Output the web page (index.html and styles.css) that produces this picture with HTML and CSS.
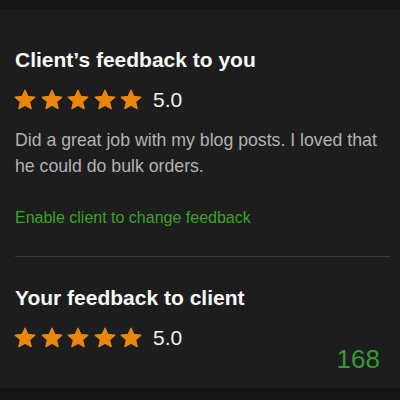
FILE: index.html
```html
<html>

<head>
	<link rel="stylesheet" href="styles.css">
</head>

<body>
	<div class="card">
		<section class="block">
			<h2>Client’s feedback to you</h2>
			<div class="rating">
				<span class="stars">
					<svg viewBox="0 0 24 24"><path d="M12 2.2l2.9 6.3 6.9.7-5.2 4.6 1.5 6.8L12 17.1l-6.1 3.5 1.5-6.8-5.2-4.6 6.9-.7z"/></svg>
					<svg viewBox="0 0 24 24"><path d="M12 2.2l2.9 6.3 6.9.7-5.2 4.6 1.5 6.8L12 17.1l-6.1 3.5 1.5-6.8-5.2-4.6 6.9-.7z"/></svg>
					<svg viewBox="0 0 24 24"><path d="M12 2.2l2.9 6.3 6.9.7-5.2 4.6 1.5 6.8L12 17.1l-6.1 3.5 1.5-6.8-5.2-4.6 6.9-.7z"/></svg>
					<svg viewBox="0 0 24 24"><path d="M12 2.2l2.9 6.3 6.9.7-5.2 4.6 1.5 6.8L12 17.1l-6.1 3.5 1.5-6.8-5.2-4.6 6.9-.7z"/></svg>
					<svg viewBox="0 0 24 24"><path d="M12 2.2l2.9 6.3 6.9.7-5.2 4.6 1.5 6.8L12 17.1l-6.1 3.5 1.5-6.8-5.2-4.6 6.9-.7z"/></svg>
				</span>
				<span class="score">5.0</span>
			</div>
			<p class="comment">Did a great job with my blog posts. I loved that he could do bulk orders.</p>
			<a class="link" href="#">Enable client to change feedback</a>
		</section>

		<section class="block second">
			<h2>Your feedback to client</h2>
			<div class="rating">
				<span class="stars">
					<svg viewBox="0 0 24 24"><path d="M12 2.2l2.9 6.3 6.9.7-5.2 4.6 1.5 6.8L12 17.1l-6.1 3.5 1.5-6.8-5.2-4.6 6.9-.7z"/></svg>
					<svg viewBox="0 0 24 24"><path d="M12 2.2l2.9 6.3 6.9.7-5.2 4.6 1.5 6.8L12 17.1l-6.1 3.5 1.5-6.8-5.2-4.6 6.9-.7z"/></svg>
					<svg viewBox="0 0 24 24"><path d="M12 2.2l2.9 6.3 6.9.7-5.2 4.6 1.5 6.8L12 17.1l-6.1 3.5 1.5-6.8-5.2-4.6 6.9-.7z"/></svg>
					<svg viewBox="0 0 24 24"><path d="M12 2.2l2.9 6.3 6.9.7-5.2 4.6 1.5 6.8L12 17.1l-6.1 3.5 1.5-6.8-5.2-4.6 6.9-.7z"/></svg>
					<svg viewBox="0 0 24 24"><path d="M12 2.2l2.9 6.3 6.9.7-5.2 4.6 1.5 6.8L12 17.1l-6.1 3.5 1.5-6.8-5.2-4.6 6.9-.7z"/></svg>
				</span>
				<span class="score">5.0</span>
			</div>
			<div class="count">168</div>
		</section>
	</div>
</body>

</html>
```

FILE: styles.css
```css
body {
	margin: 0;
	height: 400px;
	background-color: #151515;
	font-family: "Liberation Sans", Arial, sans-serif;
	overflow: hidden;
}

.card {
	margin-top: 10px;
	height: 378px;
	background-color: #1d1d1d;
	padding: 38px 10px 0 15px;
	box-sizing: border-box;
}

.second {
	border-top: 1px solid #383838;
	padding-top: 29px;
}

h2 {
	margin: 0;
	color: #fafafa;
	font-size: 21px;
	line-height: 24px;
	font-weight: bold;
}

.rating {
	display: flex;
	align-items: center;
	margin-top: 16px;
}

.stars {
	display: flex;
	gap: 2.5px;
	margin-left: -2px;
}

.stars svg {
	width: 24px;
	height: 24px;
	fill: #e8860e;
	stroke: #e8860e;
	stroke-width: 1.3;
	stroke-linejoin: round;
}

.score {
	margin-left: 10px;
	color: #f2f2f2;
	font-size: 21px;
	line-height: 22px;
}

.comment {
	margin: 15px 0 0;
	color: #b3b3b3;
	font-size: 17.7px;
	line-height: 26px;
}

.link {
	display: block;
	margin: 29px 0 28px;
	color: #38a324;
	font-size: 16px;
	line-height: 20px;
	text-decoration: none;
}

.count {
	text-align: right;
	margin: -3px 10px 0 0;
	color: #369a38;
	font-size: 26px;
	line-height: 24px;
}
```
